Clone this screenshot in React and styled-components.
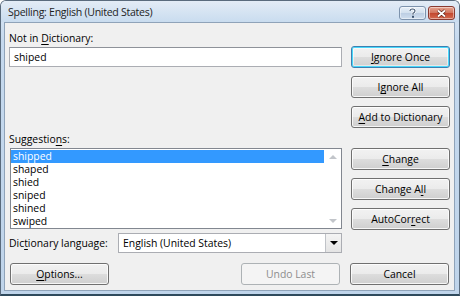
import styled, { createGlobalStyle, css } from 'styled-components'

const GlobalStyle = createGlobalStyle`
  html, body {
    margin: 0;
    padding: 0;
    background: #ffffff;
  }
  body {
    font-family: "Open Sans", "Noto Sans", "DejaVu Sans", sans-serif;
    font-size: 10.4px;
    color: #000;
  }
`

const Window = styled.div`
  width: 460px;
  height: 296px;
  box-sizing: border-box;
  display: flex;
  flex-direction: column;
  background: linear-gradient(#dbe7f4, #c5d9ee 40px, #bfd4ea);
  border: 1px solid #5a6b7d;
  border-bottom: 2px solid #2f4a5c;
  border-radius: 6px 6px 0 0;
  overflow: hidden;
`

const TitleBar = styled.div`
  height: 21px;
  flex: none;
  display: flex;
  align-items: center;
  justify-content: space-between;
  padding: 0 4px 0 7px;
  background: linear-gradient(#e3ecf6, #c9dcef);
`

const Title = styled.span`
  font-size: 10.6px;
  letter-spacing: -0.3px;
  color: #1e1e1e;
`

const Caption = styled.div`
  display: flex;
  gap: 2px;
  align-self: flex-start;
  margin-top: 5px;
`

const CaptionButton = styled.div`
  width: 27px;
  height: 14px;
  box-sizing: border-box;
  border: 1px solid ${p => (p.$close ? '#8a3a30' : '#7d93ad')};
  border-radius: 3px;
  display: flex;
  align-items: center;
  justify-content: center;
  background: ${p =>
    p.$close
      ? 'linear-gradient(#e6a48f, #d1735c 50%, #c2472f 51%, #d46a4f)'
      : 'linear-gradient(#e7eff8, #d2e0ee 50%, #bccee3 51%, #cfdeee)'};
  box-shadow: inset 0 0 0 1px rgba(255, 255, 255, 0.45);
`

const Client = styled.div`
  flex: 1;
  margin: 0 4px 3px 3px;
  background: #f0f0f0;
  border: 1px solid #8fa3b9;
  display: flex;
  flex-direction: column;
  padding: 0 5px 0 4px;
`

const Main = styled.div`
  display: grid;
  grid-template-columns: 333px 99px;
  column-gap: 9px;
`

const LeftCol = styled.div`
  display: flex;
  flex-direction: column;
`

const RightCol = styled.div`
  display: flex;
  flex-direction: column;
  padding-top: 23px;
`

const Label = styled.div`
  line-height: 14px;
  height: 14px;
  margin-top: ${p => p.$top || 0}px;
  margin-bottom: 2px;
  white-space: nowrap;
`

const Key = styled.span`
  text-decoration: underline;
  text-underline-offset: 2px;
`

const TextBox = styled.div`
  height: 20px;
  box-sizing: border-box;
  border: 1px solid #abadb3;
  border-top-color: #8e9299;
  background: #fff;
  padding: 0 4px;
  line-height: 18px;
`

const ListBox = styled.div`
  margin-left: 1px;
  height: 81px;
  box-sizing: border-box;
  border: 1px solid #828790;
  background: #fff;
  display: flex;
`

const ListItems = styled.div`
  flex: 1;
  padding-top: 1px;
`

const ListItem = styled.div`
  height: 13px;
  line-height: 13px;
  padding-left: 2px;
  ${p =>
    p.$selected &&
    css`
      background: #3399ff;
      color: #fff;
    `}
`

const ScrollTrack = styled.div`
  width: 17px;
  display: flex;
  flex-direction: column;
  justify-content: space-between;
  align-items: center;
  padding: 6px 0 5px;
  box-sizing: border-box;
`

const Arrow = styled.div`
  width: 0;
  height: 0;
  border-left: 4px solid transparent;
  border-right: 4px solid transparent;
  ${p =>
    p.$down
      ? css`border-top: 4px solid ${p.$color || '#c2c5ca'};`
      : css`border-bottom: 4px solid ${p.$color || '#c2c5ca'};`}
`

const LangRow = styled.div`
  display: flex;
  align-items: center;
  margin-top: 4px;
  height: 20px;
`

const LangLabel = styled.div`
  width: 109px;
  white-space: nowrap;
`

const Select = styled.div`
  flex: 1;
  height: 20px;
  box-sizing: border-box;
  border: 1px solid #abadb3;
  background: #fff;
  display: flex;
  align-items: center;
  padding-left: 4px;
`

const SelectText = styled.span`
  flex: 1;
`

const DropButton = styled.div`
  width: 16px;
  height: 18px;
  box-sizing: border-box;
  border-left: 1px solid #c0c3c8;
  background: linear-gradient(#f4f4f4, #e4e4e4);
  display: flex;
  align-items: center;
  justify-content: center;
`

const BottomRow = styled.div`
  display: flex;
  margin-top: 10px;
  padding-left: 1px;
`

const Spacer = styled.div`
  flex: 1;
`

const Button = styled.div`
  width: 99px;
  height: 22px;
  box-sizing: border-box;
  border: 1px solid #707070;
  border-radius: 3px;
  display: flex;
  align-items: center;
  justify-content: center;
  background: linear-gradient(#f2f2f2, #ebebeb 50%, #dddddd 51%, #cfcfcf);
  box-shadow: inset 0 0 0 1px rgba(255, 255, 255, 0.8);
  margin-bottom: ${p => p.$gap ?? 8}px;
  margin-right: ${p => p.$right ?? 0}px;
  white-space: nowrap;
  ${p =>
    p.$default &&
    css`
      border-color: #3c7fb1;
      box-shadow: inset 0 0 0 1px #48d8fb, inset 0 0 0 2px rgba(255, 255, 255, 0.5);
    `}
  ${p =>
    p.$disabled &&
    css`
      border-color: #adb2b5;
      background: #f4f4f4;
      color: #8d8d8d;
      box-shadow: none;
    `}
`

const App = () => {
  const suggestions = ['shipped', 'shaped', 'shied', 'sniped', 'shined', 'swiped']
  return (
    <>
      <GlobalStyle />
      <Window>
        <TitleBar>
          <Title>Spelling: English (United States)</Title>
          <Caption>
            <CaptionButton>
              <svg width="9" height="10" viewBox="0 0 9 10">
                <path
                  d="M2 3 Q2 1 4.5 1 Q7 1 7 3 Q7 4.5 5 5.2 L5 6.8"
                  fill="none"
                  stroke="#fff"
                  strokeWidth="2.4"
                />
                <path
                  d="M2 3 Q2 1 4.5 1 Q7 1 7 3 Q7 4.5 5 5.2 L5 6.8"
                  fill="none"
                  stroke="#3d5470"
                  strokeWidth="1.1"
                />
                <rect x="4" y="7.8" width="2" height="2" fill="#3d5470" />
              </svg>
            </CaptionButton>
            <CaptionButton $close>
              <svg width="11" height="9" viewBox="0 0 11 9">
                <path d="M2 1.5 L9 7.5 M9 1.5 L2 7.5" stroke="#5a1e14" strokeWidth="3" />
                <path d="M2 1.5 L9 7.5 M9 1.5 L2 7.5" stroke="#fff" strokeWidth="1.8" />
              </svg>
            </CaptionButton>
          </Caption>
        </TitleBar>
        <Client>
          <Main>
            <LeftCol>
              <Label $top={8}>
                Not in <Key>D</Key>ictionary:
              </Label>
              <TextBox>shiped</TextBox>
              <Label $top={65}>
                Suggestio<Key>n</Key>s:
              </Label>
              <ListBox>
                <ListItems>
                  {suggestions.map((s, i) => (
                    <ListItem key={s} $selected={i === 0}>
                      {s}
                    </ListItem>
                  ))}
                </ListItems>
                <ScrollTrack>
                  <Arrow />
                  <Arrow $down />
                </ScrollTrack>
              </ListBox>
              <LangRow>
                <LangLabel>
                  Dic<Key>t</Key>ionary language:
                </LangLabel>
                <Select>
                  <SelectText>English (United States)</SelectText>
                  <DropButton>
                    <Arrow $down $color="#000" />
                  </DropButton>
                </Select>
              </LangRow>
            </LeftCol>
            <RightCol>
              <Button $default>
                <Key>I</Key>gnore Once
              </Button>
              <Button>
                I<Key>g</Key>nore All
              </Button>
              <Button $gap={20}>
                <Key>A</Key>dd to Dictionary
              </Button>
              <Button>
                <Key>C</Key>hange
              </Button>
              <Button>
                Change A<Key>l</Key>l
              </Button>
              <Button $gap={0}>
                AutoCor<Key>r</Key>ect
              </Button>
            </RightCol>
          </Main>
          <BottomRow>
            <Button $gap={0}>
              <Key>O</Key>ptions...
            </Button>
            <Spacer />
            <Button $gap={0} $right={10} $disabled>
              Undo Last
            </Button>
            <Button $gap={0}>Cancel</Button>
          </BottomRow>
        </Client>
      </Window>
    </>
  )
}

export default App
